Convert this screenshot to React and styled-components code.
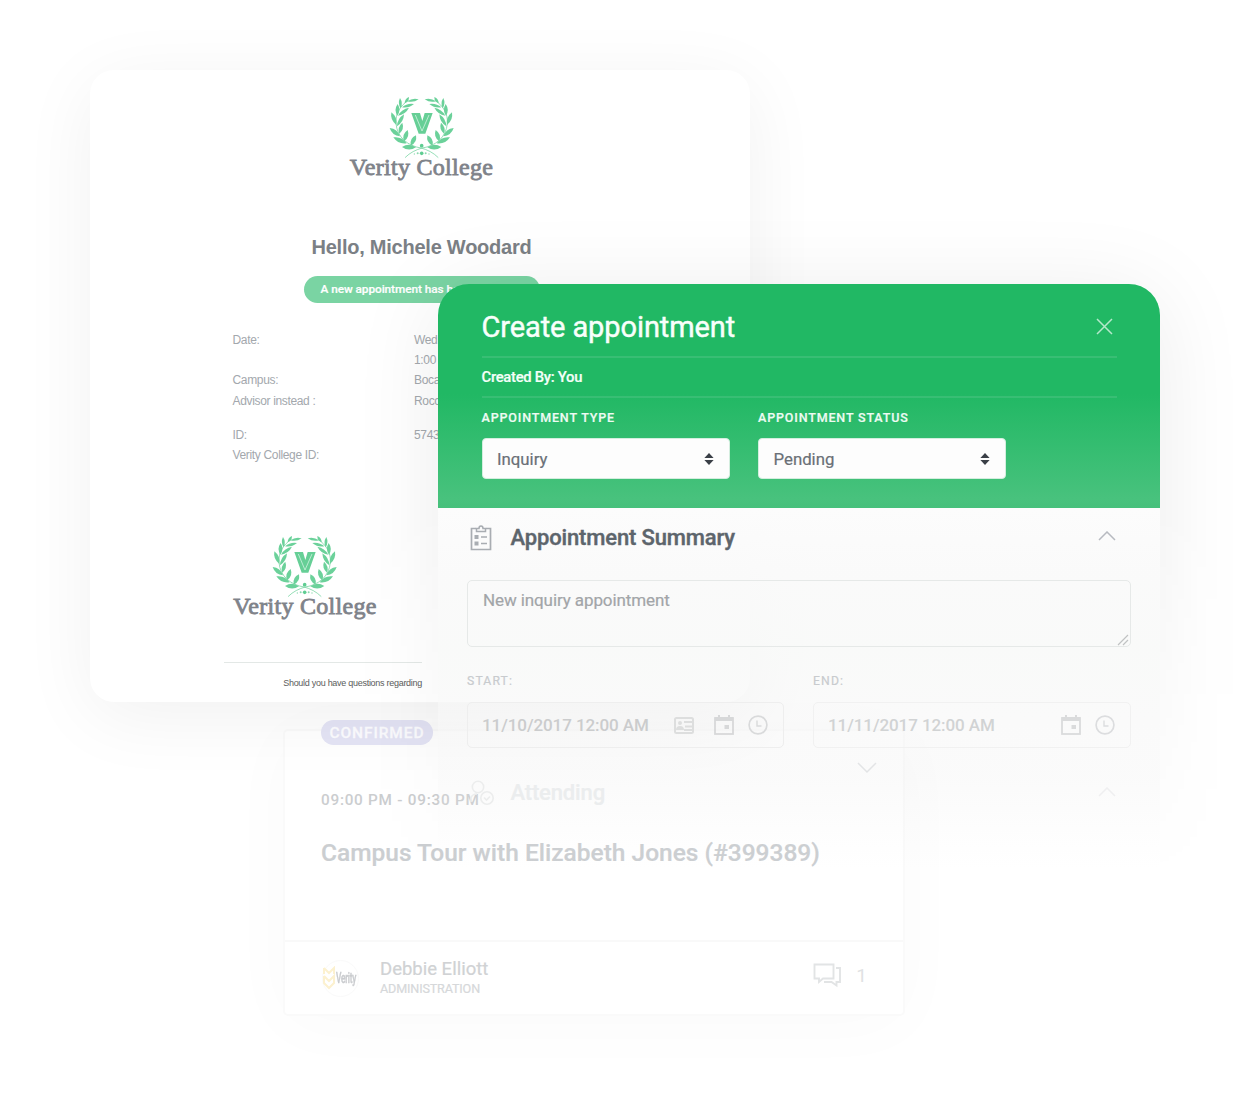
import React from "react";
import styled, { createGlobalStyle } from "styled-components";

const Global = createGlobalStyle`
  * { box-sizing: border-box; }
  body { margin: 0; background: #fff; font-family: Roboto, "Liberation Sans", sans-serif; }
`;

const Canvas = styled.main`
  position: relative;
  width: 1248px;
  height: 1118px;
  overflow: hidden;
  background: #fff;
`;

/* ---------- Text with a fixed measure ---------- */
const Text = styled.span`
  display: block;
  white-space: pre;
  font-size: ${(p) => p.$size}px;
  line-height: ${(p) => p.$line}px;
  font-weight: ${(p) => p.$weight || 400};
  letter-spacing: ${(p) => p.$track || 0}px;
  color: ${(p) => p.$color};
  -webkit-text-stroke: ${(p) => p.$heavy || 0}px ${(p) => p.$color};
`;

/* ---------- Tour card ---------- */
const TourCard = styled.section`
  position: absolute;
  left: 283px;
  top: 729px;
  width: 622px;
  height: 287px;
  display: flex;
  flex-direction: column;
  border: 2px solid #fafafa;
  border-radius: 5px;
  background: #fff;
  box-shadow: 0 8px 70px rgba(0, 0, 0, 0.025);
`;
const TourBody = styled.div`
  flex: 1;
  padding: 0 36px;
`;
const TourTop = styled.div`
  display: flex;
  justify-content: space-between;
  height: 59px;
  & > svg { margin-top: 31px; margin-right: -10px; }
`;
const Pill = styled.span`
  width: 112px;
  height: 25px;
  margin-top: -11px;
  border-radius: 13px;
  background: #e4e4f5;
  display: flex;
  align-items: center;
  justify-content: center;
`;
const TourTitle = styled.div`
  margin-top: 26px;
`;
const TourFooter = styled.footer`
  height: 74px;
  padding: 0 36px 0 37px;
  border-top: 2px solid #f9f9f9;
  display: flex;
  align-items: center;
`;
const Avatar = styled.div`
  width: 37px;
  height: 37px;
  border-radius: 50%;
  border: 1px solid #fafafa;
  display: flex;
  align-items: center;
  gap: 1px;
  margin-right: 21px;
`;
const Squeezed = styled.span`
  font-size: 14px;
  line-height: 20px;
  font-weight: 500;
  color: #cacccf;
  -webkit-text-stroke: 0.4px #cacccf;
  width: 20px;
  letter-spacing: -0.5px;
  transform: scaleX(0.6);
  transform-origin: left;
`;
const Person = styled.div`
  flex: 1;
`;
const Comments = styled.div`
  display: flex;
  align-items: center;
  gap: 14px;
  padding-bottom: 5px;
`;

/* ---------- Letter card ---------- */
const Letter = styled.section`
  position: absolute;
  left: 90px;
  top: 70px;
  width: 660px;
  height: 632px;
  border-radius: 24px;
  background: #fff;
  box-shadow: 0 14px 75px rgba(0, 0, 0, 0.06);
  font-family: "Liberation Sans", Arial, sans-serif;
`;
const LetterHead = styled.header`
  display: flex;
  flex-direction: column;
  align-items: center;
  padding-top: 25px;
  width: 663px;
`;
const LogoBox = styled.div`
  width: 146px;
  display: flex;
  flex-direction: column;
  align-items: center;
`;
const LogoName = styled.span`
  margin-top: -7px;
  font-family: "Liberation Serif", "Times New Roman", serif;
  font-size: 24px;
  line-height: 28px;
  white-space: nowrap;
  color: #7f838a;
  -webkit-text-stroke: 0.8px #7f838a;
  letter-spacing: 0.3px;
`;
const Greeting = styled.h1`
  margin: 54px 0 0;
  font-size: 20px;
  line-height: 24px;
  letter-spacing: -0.24px;
  color: #7b8085;
`;
const Notice = styled.div`
  margin-top: 17px;
  width: 236px;
  height: 27px;
  padding-left: 17px;
  border-radius: 14px;
  background: #7ad4a3;
  font-family: Roboto, sans-serif;
`;
const Facts = styled.dl`
  margin: 27px 0 0 142.5px;
  display: grid;
  grid-template-columns: 181.5px 200px;
  grid-template-rows: 20.2px 20.2px 20.2px 34px 20.2px 20.2px;
  font-size: 12px;
  line-height: 20.4px;
  color: #a3a8ad;
`;
const Fact = styled.dd`
  margin: 0;
  letter-spacing: -0.34px;
  white-space: pre;
`;
const Signature = styled.div`
  margin: 69px 0 0 142px;
`;
const LetterFoot = styled.footer`
  width: 198px;
  margin: 42px 0 0 134px;
  padding-top: 13px;
  border-top: 1px solid #e3e8e6;
  display: flex;
  justify-content: flex-end;
`;

/* ---------- Appointment dialog ---------- */
const ShadowFade = styled.div`
  position: absolute;
  left: 238px;
  top: 84px;
  width: 1010px;
  height: 1000px;
  padding: 200px 88px 0 200px;
  mask-image: linear-gradient(#000 0, #000 420px, transparent 800px);
`;
const ShadowShape = styled.div`
  height: 640px;
  border-radius: 30px;
  box-shadow: 0 10px 90px rgba(0, 0, 0, 0.08);
`;
const Dialog = styled.section`
  position: absolute;
  left: 438px;
  top: 284px;
  width: 722px;
  height: 600px;
  border-radius: 31px 31px 0 0;
  overflow: hidden;
`;
const DialogHead = styled.header`
  height: 224px;
  padding: 0 43px 0 43.5px;
  background: linear-gradient(#21b864 0, #21b864 110px, #48c27d 215px, #46c07b 100%);
`;
const TitleRow = styled.div`
  height: 74px;
  padding-top: 13px;
  display: flex;
  align-items: center;
  justify-content: space-between;
  border-bottom: 2px solid #38be74;
  & > svg { margin-right: 4px; }
`;
const CreatedRow = styled.div`
  height: 40px;
  display: flex;
  align-items: center;
  border-bottom: 2px solid #38be74;
`;
const Selects = styled.div`
  display: flex;
  gap: 28.5px;
  padding-top: 11px;
`;
const Field = styled.label`
  width: ${(p) => p.$width}px;
`;
const SelectBox = styled.div`
  margin-top: 11px;
  height: 41px;
  padding: 0 15px 0 14.5px;
  border-radius: 4px;
  background: #fdfdfd;
  border: 1px solid #d4eedf;
  display: flex;
  align-items: center;
  justify-content: space-between;
`;
const DialogBody = styled.div`
  height: 376px;
  padding: 0 29px;
  background: linear-gradient(
    rgba(252, 252, 252, 1) 0,
    rgba(250, 250, 250, 0.96) 60px,
    rgba(248, 249, 248, 0.85) 140px,
    rgba(245, 245, 245, 0.5) 210px,
    rgba(230, 230, 230, 0.18) 270px,
    rgba(240, 240, 240, 0) 360px
  );
`;
const SectionHead = styled.div`
  display: flex;
  align-items: center;
  height: ${(p) => p.$height}px;
  padding: 0 15px 0 3px;
  gap: 18.5px;
  & > span { flex: 1; }
  & > svg:last-child { margin-bottom: 3px; }
`;
const AttendingHead = styled(SectionHead)`
  margin-top: 15px;
  & > svg:first-child { margin-right: -2px; }
`;
const NoteBox = styled.div`
  margin-top: 13px;
  height: 67px;
  padding: 8px 1px 0 15px;
  border: 1px solid #e6e9e8;
  border-radius: 5px;
  display: flex;
  justify-content: space-between;
  & > svg { align-self: flex-end; }
`;
const Dates = styled.div`
  display: flex;
  gap: 29px;
  padding-top: 26px;
`;
const DateBox = styled.div`
  margin-top: 12px;
  height: 46px;
  padding: 0 15px 0 14px;
  border: 1px solid ${(p) => p.$line};
  border-radius: 5px;
  display: flex;
  align-items: center;
  & > span { flex: 1; }
`;
const IconRow = styled.div`
  display: flex;
  align-items: center;
  gap: ${(p) => p.$gap || 13}px;
`;

/* ---------- Drawings ---------- */
const LEAVES = [
  [228, 187, 186, 186, 10],
  [212, 182, 228, 151, 9.5],
  [200, 175, 160, 157, 9.5],
  [192, 169, 203, 135, 9.5],
  [180, 154, 149, 129, 9],
  [178, 146, 187, 113, 8],
  [169, 120, 154, 82, 8.5],
  [171, 124, 192, 88, 7.5],
  [172, 92, 173, 57, 8],
  [174, 92, 207, 68, 7],
  [182, 70, 180, 39, 6],
  [186, 67, 222, 57, 6],
  [194, 55, 207, 36, 5.5],
  [202, 49, 236, 43, 5.5],
];

const leafPath = ([x1, y1, x2, y2, w]) => {
  const dx = x2 - x1;
  const dy = y2 - y1;
  const len = Math.hypot(dx, dy);
  const nx = (-dy / len) * w * 1.45;
  const ny = (dx / len) * w * 1.45;
  const mx = x1 + dx * 0.5;
  const my = y1 + dy * 0.5;
  return `M${x1} ${y1}Q${mx + nx} ${my + ny} ${x2} ${y2}Q${mx - nx} ${my - ny} ${x1} ${y1}Z`;
};

const Branch = () => (
  <g>
    <path
      d="M205 46C178 64 166 88 168 115C171 158 205 183 243 189C262 194 280 203 294 217"
      fill="none"
      stroke="#7bd6a5"
      strokeWidth="2.4"
      strokeLinecap="round"
    />
    {LEAVES.map((leaf) => (
      <path key={leaf.join()} d={leafPath(leaf)} fill="#6bd19a" />
    ))}
  </g>
);

const Wreath = () => (
  <svg width="66" height="65" viewBox="147 30 198 195">
    <Branch />
    <g transform="translate(490 0) scale(-1 1)">
      <Branch />
    </g>
    <path d="M214 84H240L247 108L254 84H278L256 146H236Z" fill="#66cf96" />
    <path d="M226 90L246 138L267 90" fill="none" stroke="#c9f0db" strokeWidth="2.6" />
    <circle cx="245" cy="182" r="5.5" fill="#5fcd92" />
    <circle cx="245" cy="205" r="5.5" fill="#5fcd92" />
    <g fill="#8bdab0">
      <circle cx="233" cy="205" r="3" />
      <circle cx="257" cy="205" r="3" />
      <circle cx="223" cy="207" r="2" />
      <circle cx="267" cy="207" r="2" />
    </g>
  </svg>
);

const Logo = () => (
  <LogoBox>
    <Wreath />
    <LogoName>Verity College</LogoName>
  </LogoBox>
);

const Line = ({ w, h, d, color, sw = 1.5 }) => (
  <svg width={w} height={h} viewBox={`0 0 ${w} ${h}`} fill="none" stroke={color} strokeWidth={sw}>
    <path d={d} />
  </svg>
);

const Sorter = () => (
  <svg width="10" height="12" viewBox="0 0 10 12" fill="#3a3f47">
    <path d="M5 0L9.6 5H.4Z" />
    <path d="M5 12L9.6 7H.4Z" />
  </svg>
);

const Clipboard = () => (
  <svg width="22" height="26" viewBox="0 0 22 26" fill="none" stroke="#a9adb2" strokeWidth="1.7">
    <path d="M6 3.5H1.5V24.5H20.5V3.5H16" />
    <path d="M6.5 6.5V3.5H9Q9 1 11 1T13 3.5H15.5V6.5Z" strokeWidth="1.5" />
    <path d="M11 12H17M11 18.5H17" strokeWidth="1.3" />
    <path d="M4.5 10H8.5V14H4.5ZM4.5 16.5H8.5V20.5H4.5Z" fill="#a9adb2" stroke="none" />
  </svg>
);

const CardIcon = ({ color }) => (
  <svg width="20" height="17" viewBox="0 0 20 17">
    <rect x="1" y="1" width="18" height="15" rx="1.5" fill="none" stroke={color} strokeWidth="2" />
    <circle cx="6" cy="6" r="2" fill={color} />
    <path d="M2 13Q2 9 6 9T10 13ZM10 4H18V6H10ZM11 8.5H18V10.5H11ZM10 12H18V14H10Z" fill={color} />
  </svg>
);

const Calendar = ({ color }) => (
  <svg width="20" height="20" viewBox="0 0 20 20">
    <rect x="1" y="3" width="18" height="16" fill="none" stroke={color} strokeWidth="1.8" />
    <path d="M1 2H19V6H1ZM4 0H6V3H4ZM14 0H16V3H14ZM10.5 10H15V14H10.5Z" fill={color} />
  </svg>
);

const Clock = ({ color }) => (
  <svg width="20" height="20" viewBox="0 0 20 20" fill="none" stroke={color} strokeWidth="1.7">
    <circle cx="10" cy="10" r="8.9" />
    <path d="M9 5.5V11H13.5" strokeWidth="1.4" />
  </svg>
);

const PersonClock = () => (
  <svg width="24" height="26" viewBox="0 0 24 26" fill="none" stroke="#eceded" strokeWidth="1.6">
    <circle cx="8" cy="7" r="5.7" />
    <path d="M1 22V18Q2 14 7 14" />
    <circle cx="17" cy="18" r="6.2" />
    <path d="M14 17.5L16.5 20L20 16.5" />
  </svg>
);

const Bubbles = () => (
  <svg width="29" height="25" viewBox="0 0 29 25" fill="none" stroke="#e2e4e5" strokeWidth="1.9">
    <path d="M1.5 1.5H20.5V15.5H10L6 19V15.5H1.5Z" />
    <path d="M23 5H27V19H23.5V22.5L18.5 19H11" />
  </svg>
);

const Chevrons = () => (
  <svg width="12" height="24" viewBox="0 0 12 24" fill="none" stroke="#fcf1cf" strokeWidth="2">
    <path d="M1 2L6 7L11 2V8M1 2V8M1 10L6 15L11 10V17L6 22L1 17V10" />
  </svg>
);

/* ---------- Screen ---------- */
export default function App() {
  return (
    <Canvas>
      <Global />

      <TourCard>
        <TourBody>
          <TourTop>
            <Pill>
              <Text $size={15.5} $line={24} $weight={500} $track={0.9} $heavy={0.3} $color="#fcfcff">
                CONFIRMED
              </Text>
            </Pill>
            <Line w={20} h={12} d="M1 1L10 10L19 1" color="#e0e2e4" />
          </TourTop>
          <Text $size={15.3} $line={21} $weight={500} $track={0.75} $color="#cbcdcf">
            09:00 PM - 09:30 PM
          </Text>
          <TourTitle>
            <Text $size={24.5} $line={32} $weight={500} $heavy={0.2} $color="#cbced1">
              Campus Tour with Elizabeth Jones (#399389)
            </Text>
          </TourTitle>
        </TourBody>
        <TourFooter>
          <Avatar>
            <Chevrons />
            <Squeezed>Verity</Squeezed>
          </Avatar>
          <Person>
            <Text $size={18.5} $line={21} $heavy={0.2} $color="#d0d2d4">
              Debbie Elliott
            </Text>
            <Text $size={12.6} $line={18} $track={-0.15} $heavy={0.2} $color="#d6d8da">
              ADMINISTRATION
            </Text>
          </Person>
          <Comments>
            <Bubbles />
            <Text $size={19} $line={22} $color="#e0e2e3">
              1
            </Text>
          </Comments>
        </TourFooter>
      </TourCard>

      <Letter>
        <LetterHead>
          <Logo />
          <Greeting>Hello, Michele Woodard</Greeting>
          <Notice>
            <Text $size={11.8} $line={27} $weight={500} $heavy={0.2} $track={-0.05} $color="#fff">
              A new appointment has been
            </Text>
          </Notice>
        </LetterHead>
        <Facts>
          <Fact as="dt">Date:</Fact>
          <Fact>Wednesday</Fact>
          <Fact as="dt" />
          <Fact>1:00 PM</Fact>
          <Fact as="dt">Campus:</Fact>
          <Fact>Boca</Fact>
          <Fact as="dt">Advisor instead :</Fact>
          <Fact>Rocco</Fact>
          <Fact as="dt">ID:</Fact>
          <Fact>574339</Fact>
          <Fact as="dt">Verity College ID:</Fact>
        </Facts>
        <Signature>
          <Logo />
        </Signature>
        <LetterFoot>
          <Text $size={9} $line={14} $track={-0.28} $color="#5c5c5c">
            Should you have questions regarding
          </Text>
        </LetterFoot>
      </Letter>

      <ShadowFade>
        <ShadowShape />
      </ShadowFade>

      <Dialog>
        <DialogHead>
          <TitleRow>
            <Text $size={29} $line={36} $track={-0.1} $heavy={0.45} $color="#f8fffb">
              Create appointment
            </Text>
            <Line w={17} h={17} d="M1 1L16 16M16 1L1 16" color="#b5e8cb" />
          </TitleRow>
          <CreatedRow>
            <Text $size={14.8} $line={20} $weight={500} $track={-0.28} $heavy={0.2} $color="#f4fff8">
              Created By: You
            </Text>
          </CreatedRow>
          <Selects>
            <Field $width={248}>
              <Text $size={12.5} $line={18} $weight={500} $track={0.85} $heavy={0.2} $color="#eefbf3">
                APPOINTMENT TYPE
              </Text>
              <SelectBox>
                <Text $size={16.8} $line={24} $heavy={0.2} $color="#6a7077">
                  Inquiry
                </Text>
                <Sorter />
              </SelectBox>
            </Field>
            <Field $width={248}>
              <Text $size={12.5} $line={18} $weight={500} $track={0.85} $heavy={0.2} $color="#eefbf3">
                APPOINTMENT STATUS
              </Text>
              <SelectBox>
                <Text $size={16.8} $line={24} $heavy={0.2} $color="#6a7077">
                  Pending
                </Text>
                <Sorter />
              </SelectBox>
            </Field>
          </Selects>
        </DialogHead>
        <DialogBody>
          <SectionHead $height={59}>
            <Clipboard />
            <Text $size={22} $line={28} $weight={500} $track={-0.15} $heavy={0.4} $color="#5d656c">
              Appointment Summary
            </Text>
            <Line w={18} h={10} d="M1 9L9 1L17 9" color="#b7bac0" />
          </SectionHead>
          <NoteBox>
            <Text $size={17} $line={23} $track={-0.1} $heavy={0.2} $color="#a2a5a8">
              New inquiry appointment
            </Text>
            <Line w={12} h={12} d="M1 11L11 1M6 11L11 6" color="#c0c2c3" sw={1.2} />
          </NoteBox>
          <Dates>
            <Field $width={317}>
              <Text $size={12.2} $line={17} $track={1.15} $heavy={0.2} $color="#c8cbce">
                START:
              </Text>
              <DateBox $line="#eeeeee">
                <Text $size={17} $line={22} $weight={500} $track={-0.08} $color="#cbcccd">
                  11/10/2017 12:00 AM
                </Text>
                <IconRow $gap={20}>
                  <CardIcon color="#dddede" />
                  <IconRow $gap={14}>
                    <Calendar color="#d7d8d9" />
                    <Clock color="#d9dadb" />
                  </IconRow>
                </IconRow>
              </DateBox>
            </Field>
            <Field $width={318}>
              <Text $size={12.2} $line={17} $track={1.15} $heavy={0.2} $color="#c8cbce">
                END:
              </Text>
              <DateBox $line="#f1f1f1">
                <Text $size={17} $line={22} $weight={500} $track={-0.08} $color="#d1d3d4">
                  11/11/2017 12:00 AM
                </Text>
                <IconRow $gap={14}>
                  <Calendar color="#dadbdc" />
                  <Clock color="#dcdddf" />
                </IconRow>
              </DateBox>
            </Field>
          </Dates>
          <AttendingHead $height={60}>
            <PersonClock />
            <Text $size={22} $line={28} $weight={500} $track={-0.15} $heavy={0.2} $color="#ebedee">
              Attending
            </Text>
            <Line w={18} h={10} d="M1 9L9 1L17 9" color="#efeff0" />
          </AttendingHead>
        </DialogBody>
      </Dialog>
    </Canvas>
  );
}
